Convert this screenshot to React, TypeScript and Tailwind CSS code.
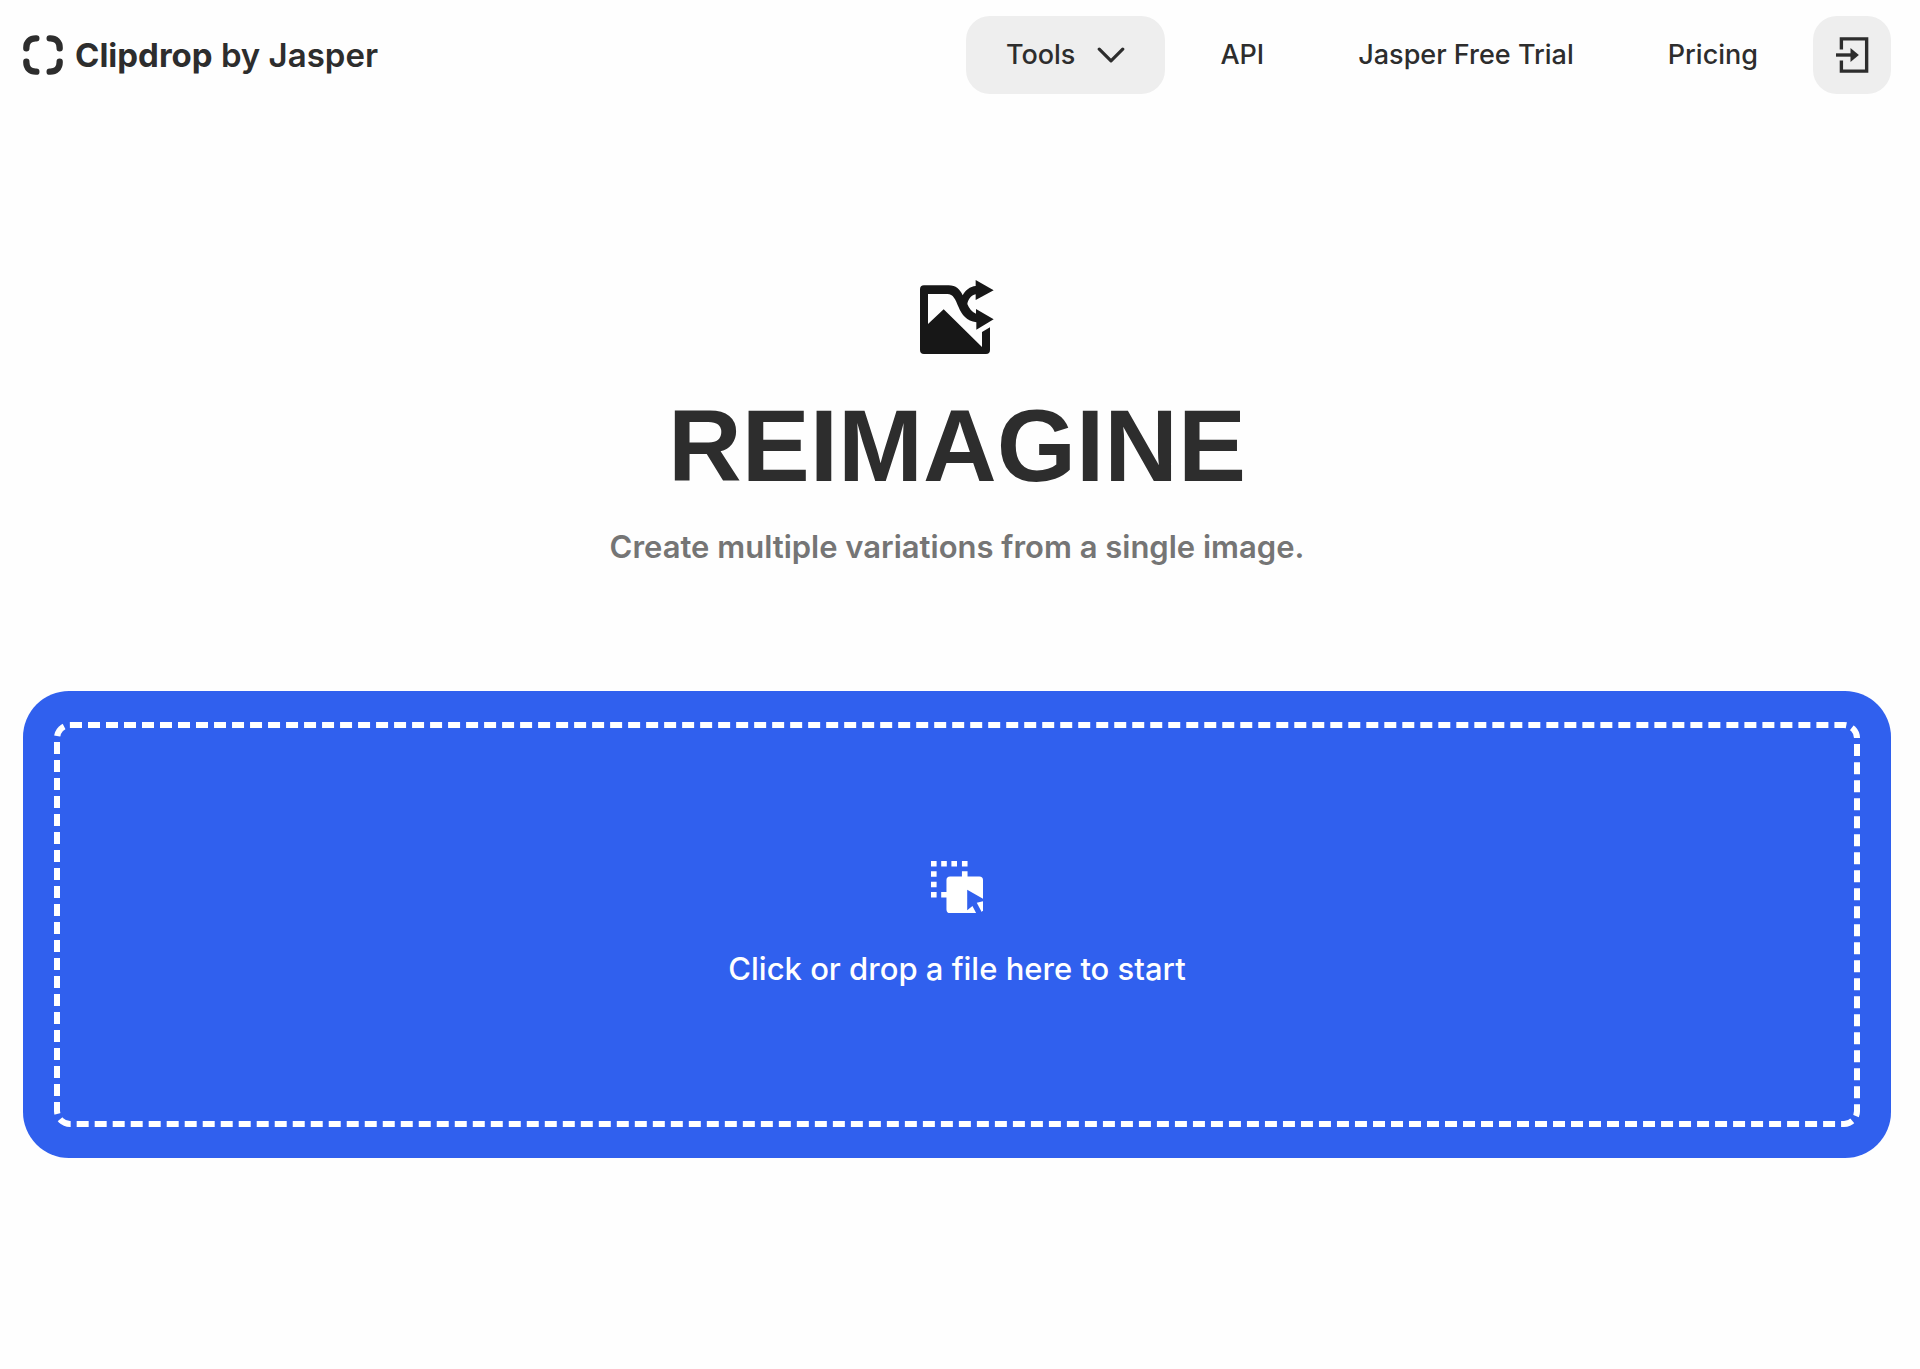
import { useState } from 'react'

const links = [
  { label: 'API', href: '#api' },
  { label: 'Jasper Free Trial', href: '#trial' },
  { label: 'Pricing', href: '#pricing' },
];

function LogoIcon() {
  return (
    <svg viewBox="0 0 120 120" className="size-10" fill="none" stroke="currentColor" strokeWidth="19" strokeLinecap="round" aria-hidden="true">
      <path d="M10 40V38C10 20 22 10 38 10H40" />
      <path d="M80 10H82C98 10 110 20 110 38V40" />
      <path d="M10 80V82C10 100 22 110 38 110H40" />
      <path d="M80 110H82C98 110 110 100 110 82V80" />
    </svg>
  );
}

function ChevronIcon() {
  return (
    <svg viewBox="0 0 26 15" className="h-4 w-7" fill="none" stroke="currentColor" strokeWidth="3" strokeLinecap="round" strokeLinejoin="round" aria-hidden="true">
      <path d="M2 2L13 13L24 2" />
    </svg>
  );
}

function LoginIcon() {
  return (
    <svg viewBox="0 0 98 106" className="h-9 w-[33px]" aria-hidden="true">
      <path d="M16 37V5H91V101H16V69" fill="none" stroke="currentColor" strokeWidth="10" />
      <path d="M0 53H48" stroke="currentColor" strokeWidth="10" />
      <path d="M43 32L68 53L43 74Z" fill="currentColor" />
    </svg>
  );
}

function ReimagineIcon() {
  return (
    <svg viewBox="66 58 222 222" className="size-[74px] text-[#171717]" fill="currentColor" aria-hidden="true">
      <path fillRule="evenodd" d="M78 74H152C174 74 186 86 194 104C202 88 216 78 233 76V58L287 89L233 118V101C219 104 210 117 208 130C213 143 221 154 234 159V145L287 176L235 207V185C206 182 191 162 182 140C172 116 166 100 148 100H90V190L137 146L252 259V214L276 200V268Q276 280 264 280H78Q66 280 66 268V86Q66 74 78 74Z" />
    </svg>
  );
}

function DropIcon() {
  return (
    <svg viewBox="93 62 158 158" className="size-[52px]" fill="currentColor" aria-hidden="true">
      <path d="M93 62h17v17H93zM124 62h17v17h-17zM155 62h17v17h-17zM187 62h17v17h-17zM93 93h17v17H93zM93 125h17v17H93zM93 156h17v17H93zM187 93h17v20h-17zM124 156h20v17h-20z" />
      <path d="M151 109H240Q251 109 251 120V177L203 149V212L219 199L230 220H151Q140 220 140 209V120Q140 109 151 109Z" />
      <path d="M232 189L251 184V212L247 217Z" />
    </svg>
  );
}

function Header() {
  return (
    <header className="flex items-center justify-between pt-4">
      <a href="#home" className="flex items-center gap-3 text-[33px] leading-10 font-semibold">
        <LogoIcon />
        <span><strong className="font-bold">Clipdrop</strong> by Jasper</span>
      </a>
      <nav className="flex items-center gap-4 text-[27px] leading-8 font-medium">
        <button type="button" className="flex h-[78px] items-center gap-[22px] rounded-3xl bg-[#eeeeee] px-10">
          Tools
          <ChevronIcon />
        </button>
        {links.map((link) => (
          <a key={link.label} href={link.href} className="px-[39px]">{link.label}</a>
        ))}
        <button type="button" aria-label="Sign in" className="flex size-[78px] items-center justify-center rounded-3xl bg-[#eeeeee]">
          <LoginIcon />
        </button>
      </nav>
    </header>
  );
}

function DropZone() {
  const [fileName, setFileName] = useState('');

  return (
    <label htmlFor="file" className="block cursor-pointer rounded-[46px] bg-[#3060ee] p-[31px] text-white">
      <span className="flex h-[405px] flex-col items-center justify-center gap-9 rounded-2xl border-6 border-dashed border-white">
        <DropIcon />
        <span className="text-[31px] leading-10 font-medium">{fileName || 'Click or drop a file here to start'}</span>
      </span>
      <input
        type="file"
        id="file"
        name="file"
        accept="image/*"
        className="hidden"
        onChange={(e) => setFileName(e.target.files?.[0]?.name ?? '')}
      />
    </label>
  );
}

export default function App() {
  return (
    <div className="min-h-screen bg-[#fefefe] pr-[29px] pl-[23px] font-['Inter',sans-serif] text-[#2d2d2d]">
      <Header />
      <main>
        <section className="flex flex-col items-center pt-[186px] pb-[124px]">
          <ReimagineIcon />
          <h1 className="pt-10 font-['Liberation_Sans',Arial,sans-serif] text-[102px] leading-[104px] font-bold">REIMAGINE</h1>
          <p className="pt-[29px] text-[31px] leading-10 font-semibold text-[#757575]">Create multiple variations from a single image.</p>
        </section>
        <DropZone />
      </main>
    </div>
  );
}
